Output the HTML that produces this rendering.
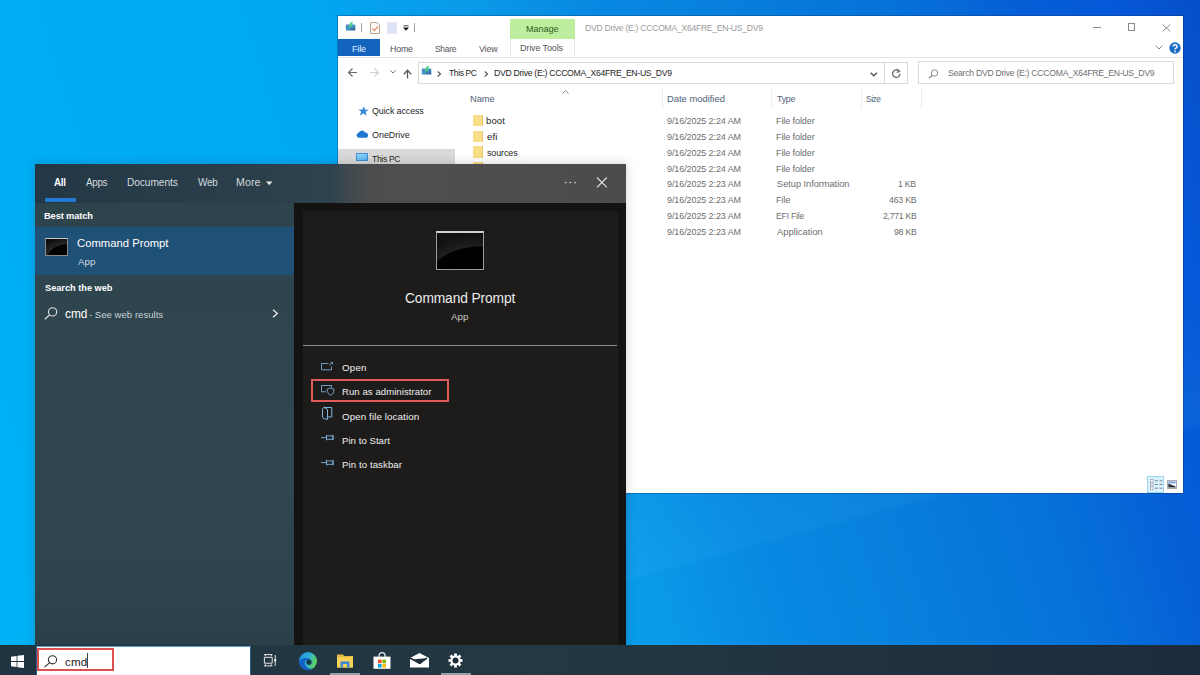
<!DOCTYPE html>
<html><head><meta charset="utf-8">
<style>
*{margin:0;padding:0;box-sizing:border-box}
html,body{width:1200px;height:675px;overflow:hidden}
body{position:relative;font-family:"Liberation Sans",sans-serif;background:linear-gradient(73deg,#00b2f6 0%,#00a8f4 35%,#0a9ae8 48%,#0888e2 57%,#0780dc 66%,#0670d8 79%,#065ed6 87%,#0658d8 94%,#064ec8 100%)}
.a{position:absolute;white-space:nowrap;line-height:normal}
svg.a{overflow:visible}
</style></head><body>
<div class="a" style="left:0px;top:0px;width:1200px;height:675px;background:linear-gradient(164.7deg,rgba(90,200,255,0) 0%,rgba(90,200,255,0) 62%,rgba(90,200,255,0.07) 74.6%,rgba(90,200,255,0) 75.3%,rgba(90,200,255,0) 100%)"></div>
<div class="a" style="left:338px;top:16.4px;width:845px;height:476.6px;background:#fff;box-shadow:0 0 0 1px rgba(10,50,110,0.35)"></div>
<svg class="a" style="left:344.5px;top:20.5px" width="11" height="10" viewBox="0 0 11 10"><rect x="0.8" y="3.5" width="9.5" height="6" rx="0.6" fill="url(#dg)"/><path d="M3.5 6.5 L5.5 1.5 L7.8 0.8 L6.8 5.5 Z" fill="#4ccf80"/></svg>
<div class="a" style="left:361px;top:22.5px;width:1px;height:9.0px;background:#a0a0a0"></div>
<svg class="a" style="left:369px;top:21px" width="12" height="13" viewBox="0 0 12 13"><path d="M1.5 1.5 H8 L10.5 4 V12.5 H1.5 Z" fill="#fdf8f4" stroke="#b8a598" stroke-width="1"/><path d="M3.5 7.5 L5.3 9.5 L9 5.5" fill="none" stroke="#d96a45" stroke-width="1.1"/></svg>
<div class="a" style="left:387px;top:22px;width:10px;height:11.5px;background:#dde5f4"></div>
<svg class="a" style="left:403px;top:25px" width="6" height="6" viewBox="0 0 6 6"><rect x="0.5" y="0.3" width="5" height="1" fill="#444"/><path d="M0 2.5 H6 L3 5.8 Z" fill="#111"/></svg>
<div class="a" style="left:414px;top:22.5px;width:1px;height:9.0px;background:#a0a0a0"></div>
<div class="a" style="left:510px;top:19px;width:65px;height:20px;background:#bdee9d"></div>
<div class="a" style="left:525.96px;top:24.47px;font-size:9.28px;color:#2f5d23;letter-spacing:-0.068px;transform:scaleX(0.9844);transform-origin:0.74px 0">Manage</div>
<div class="a" style="left:584.76px;top:22.87px;font-size:9.28px;color:#9b9b9b;letter-spacing:-0.284px;transform:scaleX(0.9274);transform-origin:0.74px 0">DVD Drive (E:) CCCOMA_X64FRE_EN-US_DV9</div>
<div class="a" style="left:1093.3px;top:27px;width:8.200000000000045px;height:1px;background:#8a8a8a"></div>
<div class="a" style="left:1127.6px;top:23.4px;width:7.800000000000182px;height:7.400000000000002px;border:1px solid #8a8a8a"></div>
<svg class="a" style="left:1161.5px;top:23.5px" width="9" height="8" viewBox="0 0 9 8"><path d="M0.5 0.3 L8.3 7.5 M8.3 0.3 L0.5 7.5" stroke="#8a8a8a" stroke-width="1"/></svg>
<div class="a" style="left:338px;top:39.3px;width:42px;height:17.200000000000003px;background:#1364bf"></div>
<div class="a" style="left:351.96px;top:43.67px;font-size:9.28px;color:#e8f2ff;letter-spacing:-0.120px;transform:scaleX(0.9624);transform-origin:0.74px 0">File</div>
<div class="a" style="left:390.26px;top:43.67px;font-size:9.28px;color:#555;letter-spacing:-0.232px;transform:scaleX(0.9578);transform-origin:0.74px 0">Home</div>
<div class="a" style="left:435.33px;top:43.67px;font-size:9.28px;color:#555;letter-spacing:-0.365px;transform:scaleX(0.9165);transform-origin:0.37px 0">Share</div>
<div class="a" style="left:478.90px;top:43.67px;font-size:9.28px;color:#555;letter-spacing:-0.182px;transform:scaleX(0.9607);transform-origin:0.00px 0">View</div>
<div class="a" style="left:510px;top:39px;width:1px;height:18px;background:#e6e6e6"></div>
<div class="a" style="left:574px;top:39px;width:1px;height:18px;background:#e6e6e6"></div>
<div class="a" style="left:520.06px;top:43.47px;font-size:9.28px;color:#555;letter-spacing:-0.110px;transform:scaleX(0.9645);transform-origin:0.74px 0">Drive Tools</div>
<div class="a" style="left:338px;top:56.5px;width:845px;height:1.0px;background:#e4e4e4"></div>
<svg class="a" style="left:1155px;top:45px" width="8" height="5" viewBox="0 0 8 5"><path d="M0.5 0.5 L4 4 L7.5 0.5" fill="none" stroke="#888" stroke-width="1"/></svg>
<svg class="a" style="left:1169px;top:41.5px" width="12" height="12" viewBox="0 0 12 12"><circle cx="6" cy="6" r="5.7" fill="#1a6cc4"/><path d="M4.2 4.6 A1.9 1.9 0 1 1 6.6 6.4 Q6 6.8 6 7.6" fill="none" stroke="#fff" stroke-width="1.5"/><circle cx="6" cy="9.4" r="0.9" fill="#fff"/></svg>
<svg class="a" style="left:347px;top:67px" width="11" height="11" viewBox="0 0 11 11"><path d="M10 5.5 H1.5 M5.5 1.5 L1.5 5.5 L5.5 9.5" fill="none" stroke="#6b6b6b" stroke-width="1.2"/></svg>
<svg class="a" style="left:369px;top:67px" width="11" height="11" viewBox="0 0 11 11"><path d="M1 5.5 H9.5 M5.5 1.5 L9.5 5.5 L5.5 9.5" fill="none" stroke="#cfcfcf" stroke-width="1.2"/></svg>
<svg class="a" style="left:390px;top:70px" width="7" height="4" viewBox="0 0 7 4"><path d="M0.5 0.5 L3 3 L5.5 0.5" fill="none" stroke="#7a7a7a" stroke-width="1"/></svg>
<svg class="a" style="left:403px;top:68.5px" width="10" height="10" viewBox="0 0 10 10"><path d="M4.5 9.5 V1.5 M0.8 5.2 L4.5 1.2 L8.2 5.2" fill="none" stroke="#5a5a5a" stroke-width="1.3"/></svg>
<div class="a" style="left:418px;top:61.5px;width:490px;height:22.0px;border:1px solid #d9d9d9"></div>
<svg class="a" style="left:420.5px;top:65px" width="11" height="10" viewBox="0 0 11 10"><defs><linearGradient id="dg" x1="0" y1="0" x2="1" y2="1"><stop offset="0" stop-color="#5a7fd0"/><stop offset="0.5" stop-color="#3f9cc0"/><stop offset="1" stop-color="#2f4f9a"/></linearGradient></defs><rect x="0.8" y="3.5" width="9.5" height="6" rx="0.6" fill="url(#dg)"/><path d="M3.5 6.5 L5.5 1.5 L7.8 0.8 L6.8 5.5 Z" fill="#4ccf80"/></svg>
<svg class="a" style="left:437px;top:70.5px" width="5" height="6" viewBox="0 0 5 6"><path d="M0.8 0.5 L3.5 3 L0.8 5.5" fill="none" stroke="#5a5a5a" stroke-width="1.2"/></svg>
<div class="a" style="left:448.61px;top:67.43px;font-size:9.42px;color:#1e1e1e;letter-spacing:-0.408px;transform:scaleX(0.8999);transform-origin:0.19px 0">This PC</div>
<svg class="a" style="left:484px;top:70.5px" width="5" height="6" viewBox="0 0 5 6"><path d="M0.8 0.5 L3.5 3 L0.8 5.5" fill="none" stroke="#5a5a5a" stroke-width="1.2"/></svg>
<div class="a" style="left:493.95px;top:67.43px;font-size:9.42px;color:#1e1e1e;letter-spacing:-0.321px;transform:scaleX(0.9198);transform-origin:0.75px 0">DVD Drive (E:) CCCOMA_X64FRE_EN-US_DV9</div>
<svg class="a" style="left:870px;top:71.5px" width="8" height="5" viewBox="0 0 8 5"><path d="M0.7 0.7 L3.8 3.8 L6.9 0.7" fill="none" stroke="#555" stroke-width="1.4"/></svg>
<div class="a" style="left:884px;top:61.5px;width:1px;height:22.0px;background:#d9d9d9"></div>
<svg class="a" style="left:891px;top:68px" width="11" height="11" viewBox="0 0 11 11"><path d="M8.2 3.3 A3.7 3.7 0 1 0 9 5.8" fill="none" stroke="#666" stroke-width="1.3"/><path d="M5.8 1 L8.6 3.5 L5.6 4.4" fill="none" stroke="#666" stroke-width="1.1"/></svg>
<div class="a" style="left:917.5px;top:61px;width:256.5px;height:22.5px;border:1px solid #d9d9d9"></div>
<svg class="a" style="left:927.5px;top:68.5px" width="11" height="10" viewBox="0 0 11 10"><circle cx="6.5" cy="4" r="3.2" fill="none" stroke="#8a8a8a" stroke-width="1"/><path d="M4.2 6.3 L1 9.3" stroke="#8a8a8a" stroke-width="1.2"/></svg>
<div class="a" style="left:947.62px;top:67.03px;font-size:9.42px;color:#707070;letter-spacing:-0.308px;transform:scaleX(0.9212);transform-origin:0.38px 0">Search DVD Drive (E:) CCCOMA_X64FRE_EN-US_DV9</div>
<svg class="a" style="left:357.5px;top:105.5px" width="11" height="10" viewBox="0 0 11 10"><path d="M6 0.3 L7 3.6 L10.6 3.7 L7.7 5.8 L8.6 9.6 L5.4 7.4 L1.8 9.6 L3.2 5.8 L0.3 3.7 L4.3 3.6 Z" fill="#3b8ad8"/></svg>
<div class="a" style="left:371.53px;top:105.60px;font-size:9.13px;color:#262626;letter-spacing:-0.092px;transform:scaleX(0.9726);transform-origin:0.37px 0">Quick access</div>
<svg class="a" style="left:355.5px;top:130px" width="13" height="8" viewBox="0 0 13 8"><path d="M2.6 7.7 A2.4 2.4 0 0 1 2.4 3 A3.6 3.6 0 0 1 9 2.6 A2.6 2.6 0 0 1 10 7.7 Z" fill="#1c78d2"/></svg>
<div class="a" style="left:371.54px;top:129.73px;font-size:8.99px;color:#262626;letter-spacing:-0.015px;transform:scaleX(0.9957);transform-origin:0.36px 0">OneDrive</div>
<div class="a" style="left:338px;top:149px;width:117px;height:15px;background:#d9d9d9"></div>
<div class="a" style="left:356px;top:153.4px;width:12px;height:7.599999999999994px;background:linear-gradient(160deg,#9ad8fb,#4fb2ee);border:1px solid #3f8fd2"></div>
<div class="a" style="left:372.42px;top:153.70px;font-size:9.13px;color:#262626;letter-spacing:-0.296px;transform:scaleX(0.9232);transform-origin:0.18px 0">This PC</div>
<svg class="a" style="left:561.5px;top:89.5px" width="7" height="4" viewBox="0 0 7 4"><path d="M0.5 3.5 L3.5 0.5 L6.5 3.5" fill="none" stroke="#8c8c8c" stroke-width="1"/></svg>
<div class="a" style="left:470.45px;top:93.23px;font-size:9.42px;color:#4e5f78;letter-spacing:-0.045px;transform:scaleX(0.9917);transform-origin:0.75px 0">Name</div>
<div class="a" style="left:662px;top:88px;width:1px;height:21px;background:#efefef"></div>
<div class="a" style="left:771px;top:88px;width:1px;height:21px;background:#efefef"></div>
<div class="a" style="left:861px;top:88px;width:1px;height:21px;background:#efefef"></div>
<div class="a" style="left:921px;top:88px;width:1px;height:21px;background:#efefef"></div>
<div class="a" style="left:666.75px;top:93.23px;font-size:9.42px;color:#4e5f78;letter-spacing:-0.005px;transform:scaleX(0.9985);transform-origin:0.75px 0">Date modified</div>
<div class="a" style="left:776.71px;top:93.23px;font-size:9.42px;color:#4e5f78;letter-spacing:-0.298px;transform:scaleX(0.9368);transform-origin:0.19px 0">Type</div>
<div class="a" style="left:866.32px;top:93.23px;font-size:9.42px;color:#4e5f78;letter-spacing:-0.497px;transform:scaleX(0.8873);transform-origin:0.38px 0">Size</div>
<div class="a" style="left:473px;top:114.9px;width:10px;height:11.5px;background:#f8de88;border-right:1px solid #e8c563"></div>
<div class="a" style="left:486.34px;top:116.37px;font-size:9.28px;color:#1e1e1e;letter-spacing:0.114px;transform:scaleX(1.0303);transform-origin:0.56px 0">boot</div>
<div class="a" style="left:667.33px;top:116.37px;font-size:9.28px;color:#6d6d6d;letter-spacing:-0.096px;transform:scaleX(0.9710);transform-origin:0.37px 0">9/16/2025 2:24 AM</div>
<div class="a" style="left:776.16px;top:116.37px;font-size:9.28px;color:#6d6d6d;letter-spacing:-0.085px;transform:scaleX(0.9690);transform-origin:0.74px 0">File folder</div>
<div class="a" style="left:473px;top:130.65px;width:10px;height:11.5px;background:#f8de88;border-right:1px solid #e8c563"></div>
<div class="a" style="left:486.53px;top:132.12px;font-size:9.28px;color:#1e1e1e;letter-spacing:0.125px;transform:scaleX(1.0442);transform-origin:0.37px 0">efi</div>
<div class="a" style="left:667.33px;top:132.12px;font-size:9.28px;color:#6d6d6d;letter-spacing:-0.096px;transform:scaleX(0.9710);transform-origin:0.37px 0">9/16/2025 2:24 AM</div>
<div class="a" style="left:776.16px;top:132.12px;font-size:9.28px;color:#6d6d6d;letter-spacing:-0.085px;transform:scaleX(0.9690);transform-origin:0.74px 0">File folder</div>
<div class="a" style="left:473px;top:146.4px;width:10px;height:11.5px;background:#f8de88;border-right:1px solid #e8c563"></div>
<div class="a" style="left:486.71px;top:147.87px;font-size:9.28px;color:#1e1e1e;letter-spacing:-0.125px;transform:scaleX(0.9660);transform-origin:0.19px 0">sources</div>
<div class="a" style="left:667.33px;top:147.87px;font-size:9.28px;color:#6d6d6d;letter-spacing:-0.096px;transform:scaleX(0.9710);transform-origin:0.37px 0">9/16/2025 2:24 AM</div>
<div class="a" style="left:776.16px;top:147.87px;font-size:9.28px;color:#6d6d6d;letter-spacing:-0.085px;transform:scaleX(0.9690);transform-origin:0.74px 0">File folder</div>
<div class="a" style="left:473px;top:162.15px;width:10px;height:11.5px;background:#f8de88;border-right:1px solid #e8c563"></div>
<div class="a" style="left:486.71px;top:163.62px;font-size:9.28px;color:#1e1e1e;letter-spacing:-0.052px;transform:scaleX(0.9849);transform-origin:0.19px 0">support</div>
<div class="a" style="left:667.33px;top:163.62px;font-size:9.28px;color:#6d6d6d;letter-spacing:-0.096px;transform:scaleX(0.9710);transform-origin:0.37px 0">9/16/2025 2:24 AM</div>
<div class="a" style="left:776.16px;top:163.62px;font-size:9.28px;color:#6d6d6d;letter-spacing:-0.085px;transform:scaleX(0.9690);transform-origin:0.74px 0">File folder</div>
<div class="a" style="left:486.53px;top:179.37px;font-size:9.28px;color:#1e1e1e;letter-spacing:-0.146px;transform:scaleX(0.9520);transform-origin:0.37px 0">autorun.inf</div>
<div class="a" style="left:667.33px;top:179.37px;font-size:9.28px;color:#6d6d6d;letter-spacing:-0.096px;transform:scaleX(0.9710);transform-origin:0.37px 0">9/16/2025 2:23 AM</div>
<div class="a" style="left:776.53px;top:179.37px;font-size:9.28px;color:#6d6d6d;letter-spacing:-0.018px;transform:scaleX(0.9940);transform-origin:0.37px 0">Setup Information</div>
<div class="a" style="left:898.35px;top:179.37px;font-size:9.28px;color:#6d6d6d;letter-spacing:-0.288px;transform:scaleX(0.9362);transform-origin:0.65px 0">1 KB</div>
<div class="a" style="left:486.34px;top:195.12px;font-size:9.28px;color:#1e1e1e;letter-spacing:-0.092px;transform:scaleX(0.9757);transform-origin:0.56px 0">bootmgr</div>
<div class="a" style="left:667.33px;top:195.12px;font-size:9.28px;color:#6d6d6d;letter-spacing:-0.096px;transform:scaleX(0.9710);transform-origin:0.37px 0">9/16/2025 2:23 AM</div>
<div class="a" style="left:776.16px;top:195.12px;font-size:9.28px;color:#6d6d6d;letter-spacing:-0.036px;transform:scaleX(0.9884);transform-origin:0.74px 0">File</div>
<div class="a" style="left:888.81px;top:195.12px;font-size:9.28px;color:#6d6d6d;letter-spacing:-0.238px;transform:scaleX(0.9435);transform-origin:0.19px 0">463 KB</div>
<div class="a" style="left:486.34px;top:210.87px;font-size:9.28px;color:#1e1e1e;letter-spacing:0.010px;transform:scaleX(1.0033);transform-origin:0.56px 0">bootmgr.efi</div>
<div class="a" style="left:667.33px;top:210.87px;font-size:9.28px;color:#6d6d6d;letter-spacing:-0.096px;transform:scaleX(0.9710);transform-origin:0.37px 0">9/16/2025 2:23 AM</div>
<div class="a" style="left:776.16px;top:210.87px;font-size:9.28px;color:#6d6d6d;letter-spacing:-0.226px;transform:scaleX(0.9286);transform-origin:0.74px 0">EFI File</div>
<div class="a" style="left:882.54px;top:210.87px;font-size:9.28px;color:#6d6d6d;letter-spacing:-0.261px;transform:scaleX(0.9314);transform-origin:0.46px 0">2,771 KB</div>
<div class="a" style="left:486.71px;top:226.62px;font-size:9.28px;color:#1e1e1e;letter-spacing:-0.196px;transform:scaleX(0.9441);transform-origin:0.19px 0">setup.exe</div>
<div class="a" style="left:667.33px;top:226.62px;font-size:9.28px;color:#6d6d6d;letter-spacing:-0.096px;transform:scaleX(0.9710);transform-origin:0.37px 0">9/16/2025 2:23 AM</div>
<div class="a" style="left:776.90px;top:226.62px;font-size:9.28px;color:#6d6d6d;letter-spacing:0.018px;transform:scaleX(1.0060);transform-origin:0.00px 0">Application</div>
<div class="a" style="left:893.63px;top:226.62px;font-size:9.28px;color:#6d6d6d;letter-spacing:-0.262px;transform:scaleX(0.9396);transform-origin:0.37px 0">98 KB</div>
<div class="a" style="left:1147px;top:475.5px;width:17px;height:17.5px;background:#d9f1fb;border:1px solid #9fd6ef"></div>
<svg class="a" style="left:1149.5px;top:478.5px" width="13" height="11" viewBox="0 0 13 11"><rect x="0.5" y="0.5" width="2.6" height="2.6" fill="#fff" stroke="#9a9aa8" stroke-width="0.7"/><rect x="0.5" y="4.2" width="2.6" height="2.6" fill="#fff" stroke="#9a9aa8" stroke-width="0.7"/><rect x="0.5" y="7.9" width="2.6" height="2.6" fill="#fff" stroke="#9a9aa8" stroke-width="0.7"/><path d="M5 1.8 H7.8 M5 5.5 H7.8 M5 9.2 H7.8 M9.5 1.8 H12.3 M9.5 5.5 H12.3 M9.5 9.2 H12.3" stroke="#6c7684" stroke-width="0.9"/></svg>
<svg class="a" style="left:1167px;top:479.5px" width="10" height="9" viewBox="0 0 10 9"><rect x="0.5" y="0.5" width="9" height="8" fill="#fff" stroke="#a0a0a8" stroke-width="0.9"/><rect x="1.3" y="1.4" width="7.4" height="2" fill="#7fa6d8"/><path d="M1.3 3.6 L8.7 6.5 V7.6 H1.3 Z" fill="#2a3040"/></svg>
<div class="a" style="left:35px;top:164px;width:591px;height:481px;box-shadow:0 0 9px 1px rgba(0,0,0,0.16)"></div>
<div class="a" style="left:35px;top:164px;width:591px;height:39px;background:linear-gradient(90deg,#233746 0%,#2b404b 40%,#2e434d 50%,#3e484e 53%,#4a4c4e 56%,#4f4f4f 60%,#4b4b4b 100%)"></div>
<div class="a" style="left:35px;top:203px;width:259px;height:442px;background:linear-gradient(180deg,#2e444d 0%,#2f4650 60%,#2e454f 85%,#2a3f48 100%)"></div>
<div class="a" style="left:294px;top:203px;width:332px;height:442px;background:#141312"></div>
<div class="a" style="left:303px;top:211px;width:315px;height:434px;background:#1e1c1b"></div>
<div class="a" style="left:54.40px;top:177.07px;font-size:10.14px;color:#ffffff;letter-spacing:-0.182px;transform:scaleX(0.9568);transform-origin:0.20px 0;font-weight:bold">All</div>
<div class="a" style="left:85.80px;top:176.93px;font-size:10.29px;color:#d5dbdf;letter-spacing:-0.273px;transform:scaleX(0.9496);transform-origin:0.00px 0">Apps</div>
<div class="a" style="left:126.88px;top:176.93px;font-size:10.29px;color:#d5dbdf;letter-spacing:-0.061px;transform:scaleX(0.9857);transform-origin:0.82px 0">Documents</div>
<div class="a" style="left:197.50px;top:176.93px;font-size:10.29px;color:#d5dbdf;letter-spacing:-0.227px;transform:scaleX(0.9680);transform-origin:0.00px 0">Web</div>
<div class="a" style="left:236.18px;top:176.93px;font-size:10.29px;color:#d5dbdf;letter-spacing:0.136px;transform:scaleX(1.0284);transform-origin:0.82px 0">More</div>
<svg class="a" style="left:265.5px;top:180.5px" width="7" height="5" viewBox="0 0 7 5"><path d="M0 0.5 H6.5 L3.25 4.2 Z" fill="#e6e6e6"/></svg>
<div class="a" style="left:45px;top:198px;width:31px;height:4px;background:#2279d2"></div>
<svg class="a" style="left:563.5px;top:180.5px" width="13" height="3" viewBox="0 0 13 3"><circle cx="1.7" cy="1.5" r="0.85" fill="#d8d8d8"/><circle cx="6.3" cy="1.5" r="0.85" fill="#d8d8d8"/><circle cx="11" cy="1.5" r="0.85" fill="#d8d8d8"/></svg>
<svg class="a" style="left:596px;top:177px" width="12" height="11" viewBox="0 0 12 11"><path d="M1 0.5 L10.8 10.3 M10.8 0.5 L1 10.3" stroke="#e0e0e0" stroke-width="1.15"/></svg>
<div class="a" style="left:44.32px;top:210.36px;font-size:9.71px;color:#ffffff;letter-spacing:-0.157px;transform:scaleX(0.9602);transform-origin:0.58px 0;font-weight:bold">Best match</div>
<div class="a" style="left:35px;top:226.6px;width:259px;height:48.70000000000002px;background:#1f5076"></div>
<div class="a" style="left:44.5px;top:238px;width:23.5px;height:18.30000000000001px;background:radial-gradient(ellipse 34px 22px at 110% 120%,#000 0%,#000 62%,#262626 66%,#0c0c0c 100%);border:1px solid #8a8a8a;border-top:1.5px solid #c8c8c8"></div>
<div class="a" style="left:77.33px;top:236.50px;font-size:11.30px;color:#ffffff;letter-spacing:-0.006px;transform:scaleX(0.9988);transform-origin:0.57px 0">Command Prompt</div>
<div class="a" style="left:77.90px;top:255.60px;font-size:9.57px;color:#d0d9e2;letter-spacing:0.045px;transform:scaleX(1.0081);transform-origin:0.00px 0">App</div>
<div class="a" style="left:44.52px;top:282.84px;font-size:9.14px;color:#ffffff;letter-spacing:0.015px;transform:scaleX(1.0044);transform-origin:0.18px 0;font-weight:bold">Search the web</div>
<svg class="a" style="left:44px;top:306.5px" width="14" height="13" viewBox="0 0 14 13"><circle cx="8.6" cy="4.9" r="4.1" fill="none" stroke="#e4e4e4" stroke-width="1.1"/><path d="M5.6 7.9 L0.8 12.3" stroke="#e4e4e4" stroke-width="1.2"/></svg>
<div class="a" style="left:65.42px;top:306.77px;font-size:11.88px;color:#ffffff;letter-spacing:-0.002px;transform:scaleX(0.9998);transform-origin:0.48px 0">cmd</div>
<div class="a" style="left:89.22px;top:308.90px;font-size:9.57px;color:#c9d1d5;letter-spacing:0.007px;transform:scaleX(1.0022);transform-origin:0.38px 0">- See web results</div>
<svg class="a" style="left:271.5px;top:309px" width="7" height="9" viewBox="0 0 7 9"><path d="M1 0.8 L5.3 4.5 L1 8.2" fill="none" stroke="#e6e6e6" stroke-width="1.4"/></svg>
<div class="a" style="left:436px;top:230.5px;width:47.5px;height:39.5px;background:radial-gradient(ellipse 75px 42px at 100% 118%,#000 0%,#010101 68%,#1e1e1e 71%,#101010 100%);border:1px solid #9c9c9c;border-top:2.5px solid #cfcfcf"></div>
<div class="a" style="left:404.50px;top:289.77px;font-size:14.06px;color:#ebebeb;letter-spacing:-0.116px;transform:scaleX(0.9805);transform-origin:0.70px 0">Command Prompt</div>
<div class="a" style="left:450.90px;top:311.10px;font-size:9.57px;color:#c9c9c9;letter-spacing:0.084px;transform:scaleX(1.0153);transform-origin:0.00px 0">App</div>
<div class="a" style="left:303px;top:344.5px;width:314px;height:1.5px;background:#8c8c8c"></div>
<svg class="a" style="left:321px;top:361.5px" width="13" height="9" viewBox="0 0 13 9"><path d="M7.5 1.5 H0.5 V7.8 H10.5 V4.5" fill="none" stroke="#7fb2e0" stroke-width="0.85"/><path d="M8.3 3.3 L11.5 0.5 M9.6 0.5 H11.6 V2.5" fill="none" stroke="#7fb2e0" stroke-width="0.8"/></svg>
<div class="a" style="left:342.33px;top:363.30px;font-size:9.35px;color:#f0f0f0;letter-spacing:0.196px;transform:scaleX(1.0418);transform-origin:0.37px 0">Open</div>
<div class="a" style="left:311.2px;top:378.9px;width:138.2px;height:22.80000000000001px;border:2.2px solid #e05a5a"></div>
<svg class="a" style="left:321px;top:384.5px" width="14" height="12" viewBox="0 0 14 12"><path d="M5 6.8 H0.5 V0.5 H10.5 V2.8" fill="none" stroke="#7fb2e0" stroke-width="0.85"/><path d="M6.3 4 Q8.6 3.5 9.6 2.9 Q10.6 3.5 12.8 4 V6.2 Q12.4 9.2 9.6 10.3 Q6.8 9.2 6.3 6.2 Z" fill="#1e1c1b" stroke="#7fb2e0" stroke-width="0.85"/></svg>
<div class="a" style="left:341.95px;top:386.60px;font-size:9.35px;color:#f0f0f0;letter-spacing:0.066px;transform:scaleX(1.0227);transform-origin:0.75px 0">Run as administrator</div>
<svg class="a" style="left:322px;top:407px" width="11" height="13" viewBox="0 0 11 13"><path d="M1.8 0.5 H9.8 V10 H5.5 M1.8 0.5 Q0.5 0.8 0.5 2.5 V10.2 Q0.8 11.6 2.3 11.8 L5.5 12.4 V3 Q5.2 1 1.8 0.5" fill="none" stroke="#7fb2e0" stroke-width="1"/></svg>
<div class="a" style="left:342.42px;top:410.53px;font-size:9.42px;color:#f0f0f0;letter-spacing:0.100px;transform:scaleX(1.0368);transform-origin:0.38px 0">Open file location</div>
<svg class="a" style="left:321px;top:434.2px" width="13" height="7" viewBox="0 0 13 7"><path d="M0 3.6 H5.5 M5.5 0.8 V6.4 M5.5 1.9 H12 V5.3 H5.5 M12 0.9 V6.3" fill="none" stroke="#7fb2e0" stroke-width="0.9"/></svg>
<div class="a" style="left:342.05px;top:434.63px;font-size:9.42px;color:#f0f0f0;letter-spacing:0.048px;transform:scaleX(1.0174);transform-origin:0.75px 0">Pin to Start</div>
<svg class="a" style="left:321px;top:458.7px" width="13" height="7" viewBox="0 0 13 7"><path d="M0 3.6 H5.5 M5.5 0.8 V6.4 M5.5 1.9 H12 V5.3 H5.5 M12 0.9 V6.3" fill="none" stroke="#7fb2e0" stroke-width="0.9"/></svg>
<div class="a" style="left:342.05px;top:459.03px;font-size:9.42px;color:#f0f0f0;letter-spacing:0.074px;transform:scaleX(1.0262);transform-origin:0.75px 0">Pin to taskbar</div>
<div class="a" style="left:0px;top:645px;width:1200px;height:30px;background:linear-gradient(90deg,#1f3440 0%,#233843 45%,#1e2b3c 100%)"></div>
<svg class="a" style="left:10.8px;top:654.5px" width="13" height="13" viewBox="0 0 13 13"><path d="M0 1.7 L5.6 0.95 V6 H0 Z M6.4 0.85 L13 0 V6 H6.4 Z M0 7 H5.6 V12.05 L0 11.3 Z M6.4 7 H13 V13 L6.4 12.15 Z" fill="#fff"/></svg>
<div class="a" style="left:36px;top:646.3px;width:215px;height:28.700000000000045px;background:#fff;border:1px solid #2f5f8f;border-top-color:#5d9fd8;border-bottom:none"></div>
<div class="a" style="left:37.1px;top:648.4px;width:76.9px;height:22.899999999999977px;border:2px solid #de5050"></div>
<svg class="a" style="left:44px;top:654.5px" width="14" height="13" viewBox="0 0 14 13"><circle cx="8.5" cy="4.8" r="4.1" fill="none" stroke="#333" stroke-width="1.1"/><path d="M5.5 7.8 L0.4 12.2" stroke="#333" stroke-width="1.1"/></svg>
<div class="a" style="left:65.44px;top:655.77px;font-size:11.45px;color:#222;letter-spacing:0.112px;transform:scaleX(1.0167);transform-origin:0.46px 0">cmd</div>
<div class="a" style="left:87.4px;top:653.3px;width:1.0px;height:15.0px;background:#444"></div>
<svg class="a" style="left:263px;top:654px" width="14" height="13" viewBox="0 0 14 13"><path d="M1 0.6 H9.5 M1 11.9 H9.5 M2.4 0.6 V2.2 M8.2 0.6 V2.2 M2.4 10.2 V11.9 M8.2 10.2 V11.9 M1.4 3.3 H9.2 V9.2 H1.4 Z M12.2 1 V11.8" fill="none" stroke="#e6e6e6" stroke-width="1"/><rect x="11.2" y="5.2" width="2" height="2" fill="#fff"/></svg>
<svg class="a" style="left:298px;top:651px" width="20" height="20" viewBox="0 0 20 20"><defs><linearGradient id="eg" x1="0" y1="0" x2="1" y2="0.4"><stop offset="0" stop-color="#1b8ae0"/><stop offset="0.55" stop-color="#2fb0d8"/><stop offset="1" stop-color="#5cd35c"/></linearGradient></defs><circle cx="10" cy="10" r="9" fill="url(#eg)"/><path d="M1 10.5 A9 9 0 0 0 15.5 17.2 A6.2 6.2 0 0 1 6.8 12.5 A3.6 3.6 0 0 1 12.5 9.2 A3.2 3.2 0 0 0 8.8 7 C4.5 7 1.2 8.8 1 10.5 Z" fill="#1360c6"/><circle cx="11" cy="11.2" r="2.6" fill="#17394f"/></svg>
<svg class="a" style="left:337px;top:653.5px" width="17" height="14" viewBox="0 0 17 14"><path d="M0 0.5 H6 L7.5 2 H16 V13.5 H0 Z" fill="#e8b93a"/><rect x="0" y="3.2" width="16" height="10.3" fill="#f7d35c"/><path d="M3.5 13.5 V7.5 H12.5 V13.5 H10 V10 H6 V13.5 Z" fill="#3a8ad6"/></svg>
<svg class="a" style="left:373px;top:652px" width="18" height="17" viewBox="0 0 18 17"><path d="M6 5 V3.6 A3 3 0 0 1 12 3.6 V5" fill="none" stroke="#e8e8e8" stroke-width="1.3"/><rect x="0.5" y="4.6" width="17" height="12.2" fill="#fff"/><rect x="5" y="7.6" width="3.6" height="3.6" fill="#f25022"/><rect x="9.4" y="7.6" width="3.6" height="3.6" fill="#7fba00"/><rect x="5" y="12" width="3.6" height="3.6" fill="#00a4ef"/><rect x="9.4" y="12" width="3.6" height="3.6" fill="#ffb900"/></svg>
<svg class="a" style="left:410px;top:653px" width="19" height="15" viewBox="0 0 19 15"><path d="M0 5 L9.5 0 L19 5 V14.5 H0 Z" fill="#fff"/><path d="M0 5 L9.5 10.2 L17 5.2" fill="none" stroke="#1f2e38" stroke-width="1.6"/><path d="M4 6.2 L16.5 5.2 L10.5 11 Z" fill="#1f2e38"/></svg>
<svg class="a" style="left:448px;top:653px" width="15" height="15" viewBox="0 0 15 15"><g transform="translate(7.5 7.5)" fill="#fff"><circle r="5"/><rect x="-1.4" y="-7" width="2.8" height="14"/><rect x="-1.4" y="-7" width="2.8" height="14" transform="rotate(45)"/><rect x="-1.4" y="-7" width="2.8" height="14" transform="rotate(90)"/><rect x="-1.4" y="-7" width="2.8" height="14" transform="rotate(135)"/></g><circle cx="7.5" cy="7.5" r="3" fill="#1f2d3b"/></svg>
<div class="a" style="left:330px;top:673.3px;width:30px;height:1.7000000000000455px;background:#8ea2ae"></div>
<div class="a" style="left:441px;top:673.3px;width:30px;height:1.7000000000000455px;background:#8ea2ae"></div>
</body></html>
